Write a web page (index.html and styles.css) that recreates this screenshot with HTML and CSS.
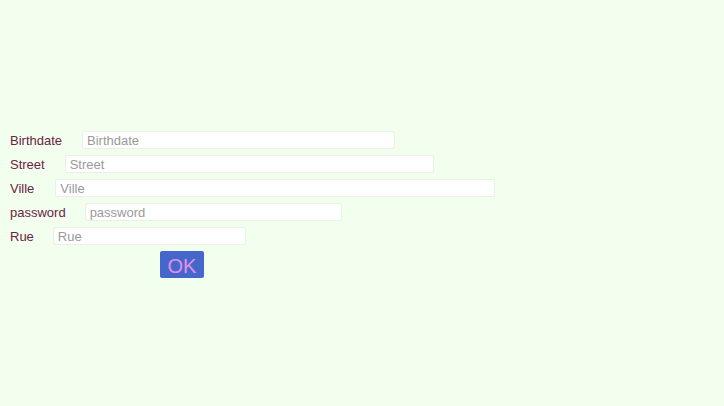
FILE: index.html
```html
<!DOCTYPE html>
<html>
<head>
<meta charset="utf-8">
<link rel="stylesheet" href="styles.css">
</head>
<body>
<form class="form">
  <div class="row"><label class="lbl">Birthdate</label><input class="field w-birth" placeholder="Birthdate"></div>
  <div class="row"><label class="lbl">Street</label><input class="field w-street" placeholder="Street"></div>
  <div class="row"><label class="lbl">Ville</label><input class="field w-ville" placeholder="Ville"></div>
  <div class="row"><label class="lbl">password</label><input class="field w-pass" placeholder="password"></div>
  <div class="row"><label class="lbl">Rue</label><input class="field w-rue" placeholder="Rue"></div>
  <div class="actions"><button type="button" class="ok">OK</button></div>
</form>
</body>
</html>
```
FILE: styles.css
```css
html, body {
  margin: 0;
  padding: 0;
  background: #f3ffee;
  height: 100%;
}
body {
  font-family: "Liberation Sans", Arial, sans-serif;
}
.form {
  padding: 131px 0 0 10px;
  display: flex;
  flex-direction: column;
  gap: 6px;
}
.row {
  display: flex;
  align-items: center;
  gap: 20px;
  height: 18px;
}
.lbl {
  font-size: 13px;
  color: #6a2346;
}
.field {
  box-sizing: border-box;
  height: 18px;
  margin: 0;
  padding: 0 4px;
  border: 1px solid #e8f2e2;
  border-radius: 2px;
  background: #ffffff;
  font-family: "Liberation Sans", Arial, sans-serif;
  font-size: 13px;
  color: #333;
  outline: none;
}
.field::placeholder {
  color: #9a9a9a;
}
.w-birth { width: 313px; }
.w-street { width: 369px; }
.w-ville { width: 440px; margin-left: 1px; }
.w-pass { width: 257px; margin-left: -1px; }
.w-rue { width: 193px; margin-left: -1px; }
.actions {
  display: flex;
  padding-left: 150px;
}
.ok {
  width: 44px;
  height: 27px;
  margin: 0;
  padding: 3px 0 0;
  border: none;
  border-radius: 2px;
  background: #4567cc;
  color: #e190e6;
  font-family: "Liberation Sans", Arial, sans-serif;
  font-size: 20px;
  line-height: 24px;
}
```
